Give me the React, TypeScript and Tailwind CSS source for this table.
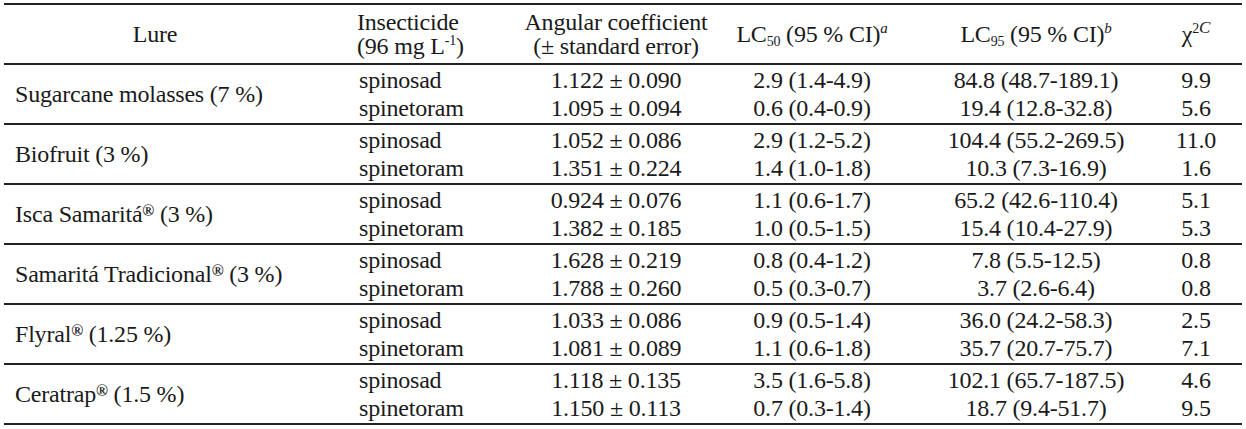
import React from "react";

interface Group {
    lure: React.ReactNode;
    rows: { insecticide: string; coef: string; lc50: string; lc95: string; chi: string }[];
}

const Reg = () => <sup className="text-[16px] font-bold relative -top-[6px]">®</sup>;

const groups: Group[] = [
    {
        lure: <>Sugarcane molasses (7 %)</>,
        rows: [
            { insecticide: "spinosad", coef: "1.122 ± 0.090", lc50: "2.9 (1.4-4.9)", lc95: "84.8 (48.7-189.1)", chi: "9.9" },
            { insecticide: "spinetoram", coef: "1.095 ± 0.094", lc50: "0.6 (0.4-0.9)", lc95: "19.4 (12.8-32.8)", chi: "5.6" },
        ],
    },
    {
        lure: <>Biofruit (3 %)</>,
        rows: [
            { insecticide: "spinosad", coef: "1.052 ± 0.086", lc50: "2.9 (1.2-5.2)", lc95: "104.4 (55.2-269.5)", chi: "11.0" },
            { insecticide: "spinetoram", coef: "1.351 ± 0.224", lc50: "1.4 (1.0-1.8)", lc95: "10.3 (7.3-16.9)", chi: "1.6" },
        ],
    },
    {
        lure: <>Isca Samaritá<Reg /> (3 %)</>,
        rows: [
            { insecticide: "spinosad", coef: "0.924 ± 0.076", lc50: "1.1 (0.6-1.7)", lc95: "65.2 (42.6-110.4)", chi: "5.1" },
            { insecticide: "spinetoram", coef: "1.382 ± 0.185", lc50: "1.0 (0.5-1.5)", lc95: "15.4 (10.4-27.9)", chi: "5.3" },
        ],
    },
    {
        lure: <>Samaritá Tradicional<Reg /> (3 %)</>,
        rows: [
            { insecticide: "spinosad", coef: "1.628 ± 0.219", lc50: "0.8 (0.4-1.2)", lc95: "7.8 (5.5-12.5)", chi: "0.8" },
            { insecticide: "spinetoram", coef: "1.788 ± 0.260", lc50: "0.5 (0.3-0.7)", lc95: "3.7 (2.6-6.4)", chi: "0.8" },
        ],
    },
    {
        lure: <>Flyral<Reg /> (1.25 %)</>,
        rows: [
            { insecticide: "spinosad", coef: "1.033 ± 0.086", lc50: "0.9 (0.5-1.4)", lc95: "36.0 (24.2-58.3)", chi: "2.5" },
            { insecticide: "spinetoram", coef: "1.081 ± 0.089", lc50: "1.1 (0.6-1.8)", lc95: "35.7 (20.7-75.7)", chi: "7.1" },
        ],
    },
    {
        lure: <>Ceratrap<Reg /> (1.5 %)</>,
        rows: [
            { insecticide: "spinosad", coef: "1.118 ± 0.135", lc50: "3.5 (1.6-5.8)", lc95: "102.1 (65.7-187.5)", chi: "4.6" },
            { insecticide: "spinetoram", coef: "1.150 ± 0.113", lc50: "0.7 (0.3-1.4)", lc95: "18.7 (9.4-51.7)", chi: "9.5" },
        ],
    },
];

const cols = "grid grid-cols-[302px_194px_232px_160px_258px_92px]";

export default function App() {
    return (
        <div
            className="w-[1246px] h-[429px] bg-white text-[#1a1a1a] text-[24px] tracking-[-0.2px] pt-[3px] pl-[4px]"
            style={{ fontFamily: '"Liberation Serif", "Times New Roman", serif' }}
        >
            <div className="w-[1238px] border-t-2 border-[#222]">
                {/* header */}
                <div className={`${cols} h-[60px] border-b-2 border-[#222] items-center leading-[24px]`}>
                    <div className="text-center">Lure</div>
                    <div className="pl-[51px]">
                        <div>Insecticide</div>
                        <div>(96 mg L<sup className="text-[14px] relative -top-[9px]">-1</sup>)</div>
                    </div>
                    <div className="text-center">
                        <div>Angular coefficient</div>
                        <div>(± standard error)</div>
                    </div>
                    <div className="text-center">
                        LC<sub className="text-[14px]">50</sub> (95 % CI)<sup className="text-[15px] italic relative -top-[9px]">a</sup>
                    </div>
                    <div className="text-center pl-[30px]">
                        LC<sub className="text-[14px]">95</sub> (95 % CI)<sup className="text-[15px] italic relative -top-[9px]">b</sup>
                    </div>
                    <div className="text-center">
                        χ<sup className="text-[14px] relative -top-[9px]">2</sup><sup className="text-[17px] italic relative -top-[9px]">C</sup>
                    </div>
                </div>

                {groups.map((g, i) => (
                    <div key={i} className={`${cols} h-[60px] border-b-2 border-[#222] items-center leading-[28px]`}>
                        <div className="pl-[11px]">{g.lure}</div>
                        <div className="pl-[53px]">
                            {g.rows.map((r) => <div key={r.insecticide}>{r.insecticide}</div>)}
                        </div>
                        <div className="text-center">
                            {g.rows.map((r) => <div key={r.insecticide}>{r.coef}</div>)}
                        </div>
                        <div className="text-center">
                            {g.rows.map((r) => <div key={r.insecticide}>{r.lc50}</div>)}
                        </div>
                        <div className="text-center pl-[30px]">
                            {g.rows.map((r) => <div key={r.insecticide}>{r.lc95}</div>)}
                        </div>
                        <div className="text-center">
                            {g.rows.map((r) => <div key={r.insecticide}>{r.chi}</div>)}
                        </div>
                    </div>
                ))}
            </div>
        </div>
    );
}
